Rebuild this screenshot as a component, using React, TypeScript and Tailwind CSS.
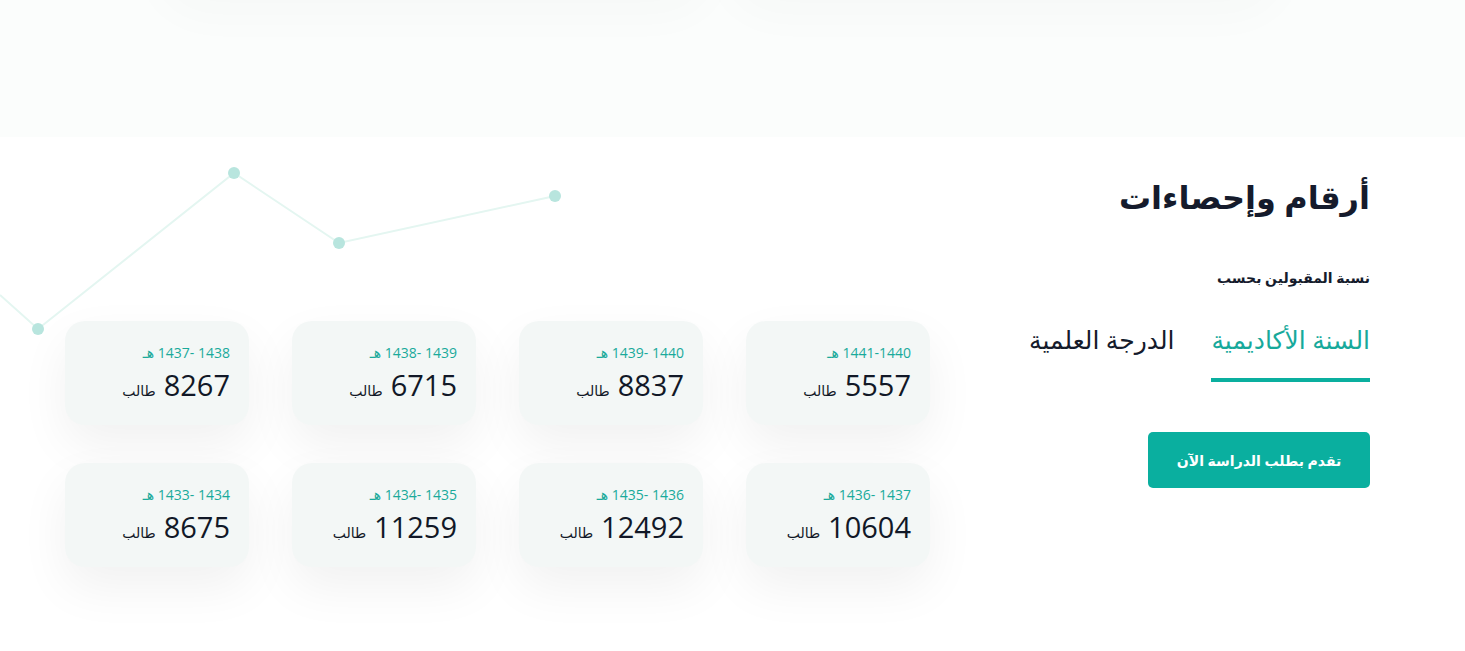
import React, { useState } from "react";

const stats = [
  { years: "1441-1440 هـ", count: "5557" },
  { years: "1440 -1439 هـ", count: "8837" },
  { years: "1439 -1438 هـ", count: "6715" },
  { years: "1438 -1437 هـ", count: "8267" },
  { years: "1437 -1436 هـ", count: "10604" },
  { years: "1436 -1435 هـ", count: "12492" },
  { years: "1435 -1434 هـ", count: "11259" },
  { years: "1434 -1433 هـ", count: "8675" },
];

function ChartLine() {
  // decorative line chart behind the cards
  const pts = [
    [38, 329],
    [234, 173],
    [339, 243],
    [555, 196],
  ];
  return (
    <svg className="absolute left-0 top-0 pointer-events-none" width="600" height="360" viewBox="0 137 600 360">
      <polyline
        points={`0,295 ${pts.map((p) => p.join(",")).join(" ")}`}
        fill="none"
        stroke="#e4f6f1"
        strokeWidth="2"
      />
      {pts.map((p, i) => (
        <circle key={i} cx={p[0]} cy={p[1]} r="6" fill="#b8e5de" />
      ))}
    </svg>
  );
}

function StatCard({ years, count }: { years: string; count: string }) {
  return (
    <div className="h-[104px] rounded-[20px] bg-[#f3f7f6] shadow-[0_20px_50px_rgba(0,0,0,0.06)] pr-[19px] pt-[22px]">
      <p className="text-[14px] leading-[20px] text-[#1aaa9b]">{years}</p>
      <div className="mt-[5px] flex items-baseline gap-[8px]">
        <span className="text-[29px] leading-[34px] text-[#111827]">{count}</span>
        <span className="text-[14px] text-[#111827]">طالب</span>
      </div>
    </div>
  );
}

export default function App() {
  const [tab, setTab] = useState("year");

  return (
    <div dir="rtl" className="min-h-screen bg-white overflow-hidden" style={{ fontFamily: '"Open Sans", "DejaVu Sans", sans-serif' }}>
      {/* bottom of the previous section: card shadows bleeding down */}
      <div className="h-[137px] bg-[#fbfdfc] overflow-hidden">
        <div dir="ltr" className="flex pl-[150px]">
          <div className="h-[60px] w-[570px] -mt-[60px] rounded-b-[60px] bg-[#fafbfb] shadow-[0_20px_40px_rgba(0,0,0,0.02)]"></div>
          <div className="h-[60px] w-[570px] -mt-[60px] rounded-b-[60px] bg-[#fafbfb] shadow-[0_20px_40px_rgba(0,0,0,0.02)]"></div>
        </div>
      </div>

      <section className="relative h-[514px]">
        <ChartLine />
        <div className="relative flex pr-[95px]">
          {/* title + tabs */}
          <div className="w-[440px] shrink-0 pt-[38px]">
            <h2 className="text-[32px] leading-[44px] font-bold text-[#151b2c]">أرقام وإحصاءات</h2>
            <p className="mt-[48px] text-[14px] font-bold text-[#151b2c]">نسبة المقبولين بحسب</p>
            <div className="mt-[34px] flex gap-[37px]">
              <button
                onClick={() => setTab("year")}
                className={`pb-[22px] border-b-4 text-[25px] leading-[34px] ${tab === "year" ? "border-[#0aaf9f] text-[#17a99b]" : "border-transparent text-[#151b2c]"}`}
              >
                السنة الأكاديمية
              </button>
              <button
                onClick={() => setTab("degree")}
                className={`pb-[22px] border-b-4 text-[25px] leading-[34px] ${tab === "degree" ? "border-[#0aaf9f] text-[#17a99b]" : "border-transparent text-[#151b2c]"}`}
              >
                الدرجة العلمية
              </button>
            </div>
            <button className="mt-[50px] h-[56px] w-[222px] rounded-[5px] bg-[#0aaf9f] text-[14px] font-bold text-white">
              تقدم بطلب الدراسة الآن
            </button>
          </div>

          {/* cards */}
          <div className="grid grid-cols-[repeat(4,184px)] gap-x-[43px] gap-y-[38px] pt-[184px]">
            {stats.map((s) => (
              <StatCard key={s.count} years={s.years} count={s.count} />
            ))}
          </div>
        </div>
      </section>
    </div>
  );
}
